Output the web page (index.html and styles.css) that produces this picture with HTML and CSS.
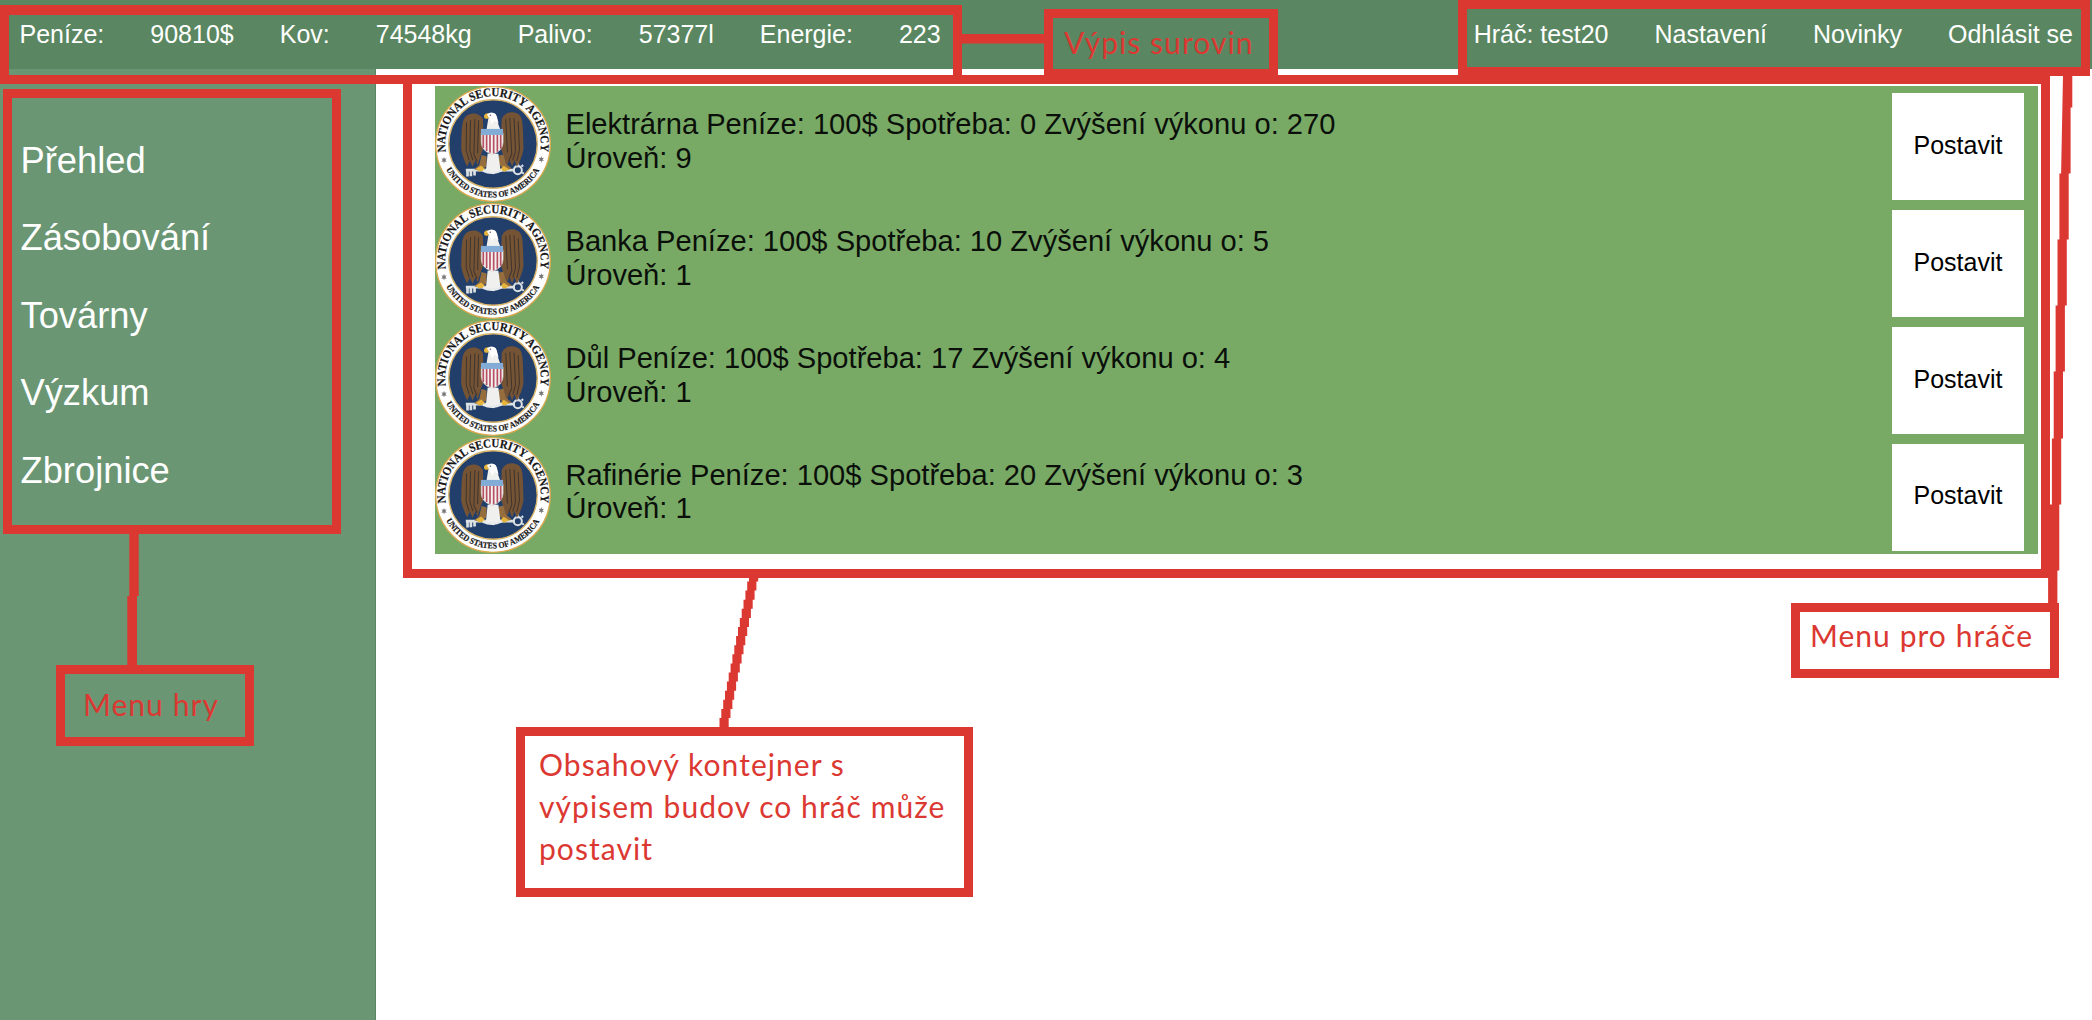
FILE: index.html
```html
<!DOCTYPE html>
<html lang="cs">
<head>
<meta charset="utf-8">
<title>Továrny</title>
<link rel="stylesheet" href="styles.css">
</head>
<body>
<svg class="defs" aria-hidden="true">
  <defs>
    <symbol id="seal" viewBox="0 0 346 346">
      <circle cx="173" cy="173" r="171" fill="#fff" stroke="#d9a84e" stroke-width="4"/>
      <circle cx="173" cy="173" r="132" fill="#223f6c" stroke="#d9b56a" stroke-width="4"/>
      <path id="ring-top" fill="none" d="M32.600 198.700A142.700 142.700 0 1 1 313.400 198.700"/>
      <path id="ring-bottom" fill="none" d="M32 247A159 159 0 0 0 314 247"/>
      <text class="seal-text seal-top"><textPath href="#ring-top" startOffset="2" textLength="494" lengthAdjust="spacingAndGlyphs">NATIONAL SECURITY AGENCY</textPath></text>
      <text class="seal-text seal-bottom"><textPath href="#ring-bottom" startOffset="2" textLength="340" lengthAdjust="spacingAndGlyphs">UNITED STATES OF AMERICA</textPath></text>
      <path fill="#777" d="M27 211l2 6 6-1-4 5 4 5-6-1-2 6-2-6-6 1 4-5-4-5 6 1zM317 209l2 6 6-1-4 5 4 5-6-1-2 6-2-6-6 1 4-5-4-5 6 1z"/>
      <g stroke="#dce1e3" fill="none" stroke-width="8">
        <path d="M92 251H238M97 253v17M107 253v16M118 253v14"/>
        <circle cx="247" cy="251" r="12" stroke-width="6"/>
        <path d="M247 235v-5M258 240l5-4M260 258l5 4" stroke-width="6"/>
      </g>
      <g fill="#755335">
        <path d="M143 99C137 87 122 78 103 84C91 88 84 98 82 112C78 135 79 161 78 187C80 204 87 222 96 240L104 222L112 241L121 221L127 237L137 205L145 184Z"/>
        <path d="M199 99C205 84 220 75 236 79C252 82 259 91 261 112C263 137 263 163 264 187C261 208 253 226 244 241L237 221L230 240L222 220L214 237L205 210L196 184Z"/>
      </g>
      <g fill="none" stroke="#3f352e" stroke-width="3">
        <path d="M94 109l-1 83 9 30M106 102l-2 91 9 28M119 99l-3 105 10 22M130 102l-3 98"/>
        <path d="M248 105l4 84-8 34M236 97l4 98-8 27M223 95l6 108-9 21M211 98l5 100"/>
      </g>
      <path fill="#966e3e" d="M139 206l15 4-1 30-20 13-16-5 15-12zM190 208l14-4 8 28 17 14-18 6-20-16z"/>
      <path fill="#f0f1ef" d="M154 128L160 91Q166 77 178 82Q187 88 187 109L194 128ZM157 202h32l6 47-20 14-23-11z"/>
      <path fill="#e5b43d" d="M160 96Q146 101 146 90Q148 80 159 81L170 87ZM122 247l16-10 14 14-20 4zM193 250l12-12 16 10-14 8z"/>
      <path fill="#fff" d="M155 85Q168 74 181 84L190 112L178 103L170 114L164 99Z"/>
      <circle cx="165" cy="87" r="2" fill="#333"/>
      <path fill="#f4f2ef" stroke="#d9d6d5" stroke-width="2" d="M138 140h65v28q0 25-32 37-33-12-33-37z"/>
      <path fill="none" stroke="#b64f64" stroke-width="5" d="M144 145v40M154 145v49M164 145v54M175 145v56M186 145v51M196 145v42"/>
      <path fill="#82abd6" d="M137 128h66v18h-66z"/>
      <path fill="none" stroke="#e8ebed" stroke-width="8" d="M143 252q28 13 57-1"/>
    </symbol>
  </defs>
</svg>

<header class="topbar">
  <div class="group">
    <span>Peníze:</span><span>90810$</span><span>Kov:</span><span>74548kg</span>
    <span>Palivo:</span><span>57377l</span><span>Energie:</span><span>223</span>
  </div>
  <nav class="group">
    <a>Hráč: test20</a><a>Nastavení</a><a>Novinky</a><a>Odhlásit se</a>
  </nav>
</header>

<div class="layout">
  <nav class="sidebar">
    <a>Přehled</a><a>Zásobování</a><a>Továrny</a><a>Výzkum</a><a>Zbrojnice</a>
  </nav>
  <main class="content">
    <section class="buildings">
      <article class="building">
        <svg class="seal"><use href="#seal"/></svg>
        <p class="info">Elektrárna Peníze: 100$ Spotřeba: 0 Zvýšení výkonu o: 270<br>Úroveň: 9</p>
        <button class="build">Postavit</button>
      </article>
      <article class="building">
        <svg class="seal"><use href="#seal"/></svg>
        <p class="info">Banka Peníze: 100$ Spotřeba: 10 Zvýšení výkonu o: 5<br>Úroveň: 1</p>
        <button class="build">Postavit</button>
      </article>
      <article class="building">
        <svg class="seal"><use href="#seal"/></svg>
        <p class="info">Důl Peníze: 100$ Spotřeba: 17 Zvýšení výkonu o: 4<br>Úroveň: 1</p>
        <button class="build">Postavit</button>
      </article>
      <article class="building">
        <svg class="seal"><use href="#seal"/></svg>
        <p class="info">Rafinérie Peníze: 100$ Spotřeba: 20 Zvýšení výkonu o: 3<br>Úroveň: 1</p>
        <button class="build">Postavit</button>
      </article>
    </section>
  </main>
</div>

<svg class="connectors" viewBox="0 0 2092 1020" aria-hidden="true">
  <path d="M962 34h83v9.500h-83z"/>
  <path d="M129.300 533h9.400v63h-1.700v70h-9.700v-70h2z"/>
  <path d="M2063 75h9.300v32.500h-1.700v66h-1.900v66h-1.900v66h-1.900v66h-1.900v67h-1.800v66h-1.900v66h-1.900v33h-9.300v-33h1.900v-66h1.900v-66h1.800v-67h1.900v-66h1.900v-66h1.900v-66h1.700z"/>
  <path d="M749 577h9.200v4.500h-1.800v9.100h-1.800v9.100h-1.900v9.100h-1.800v9.100h-1.900v9.100h-1.800v9.100h-1.900v9.100h-1.800v9.100h-1.900v9.100h-1.800v9.100h-1.900v9.100h-1.800v9.100h-1.900v9.100h-1.800v9.100h-1.900v9.100h-1.800v10h-9.200v-10h1.800v-9.100h1.900v-9.100h1.800v-9.100h1.900v-9.100h1.800v-9.100h1.900v-9.100h1.800v-9.100h1.900v-9.100h1.800v-9.100h1.900v-9.100h1.800v-9.100h1.900v-9.100h1.800v-9.100h1.900v-9.100h1.800v-9.100h1.800z"/>
</svg>
<div class="frame frame-resources"></div>
<div class="frame frame-player"></div>
<div class="frame frame-menu"></div>
<div class="frame frame-content"></div>
<div class="frame note note-resources">Výpis surovin</div>
<div class="frame note note-menu">Menu hry</div>
<div class="frame note note-content">Obsahový kontejner s<br>výpisem budov co hráč může<br>postavit</div>
<div class="frame note note-player">Menu pro hráče</div>
</body>
</html>
```
FILE: styles.css
```css
* { box-sizing: border-box; }
body {
  margin: 0;
  height: 1020px;
  position: relative;
  display: flex;
  flex-direction: column;
  overflow: hidden;
  background: #fff;
  font-family: "Liberation Sans", Arial, sans-serif;
}
.defs { position: absolute; width: 0; height: 0; }
.topbar {
  height: 69px;
  flex: none;
  display: flex;
  justify-content: space-between;
  align-items: flex-start;
  padding: 20px 19px 0 19.5px;
  background: #5a8761;
  color: #fff;
  font-size: 25px;
  line-height: 29px;
}
.group { display: flex; gap: 46px; white-space: nowrap; }
.layout { flex: 1; display: flex; }
.sidebar {
  width: 376px;
  flex: none;
  display: flex;
  flex-direction: column;
  padding: 52.5px 0 0 20.5px;
  background: #6a9674;
  border-right: 1px solid #5a8761;
  color: #fff;
  font-size: 36.3px;
  line-height: 77.6px;
}
.content { flex: 1; padding: 17.3px 54px 0 58.5px; }
.buildings { background: #78aa66; }
.building {
  display: flex;
  align-items: flex-start;
  height: 116.9px;
  padding-right: 14px;
}
.seal { width: 116px; height: 116px; flex: none; }
.info {
  flex: 1;
  margin: 0;
  padding: 22px 0 0 15px;
  color: #0b0f0a;
  font-size: 29.1px;
  line-height: 33.5px;
  white-space: nowrap;
}
.build {
  width: 132px;
  height: 107px;
  margin-top: 7px;
  padding: 0 0 3px;
  border: 0;
  background: #fff;
  color: #000;
  font: 25px "Liberation Sans", Arial, sans-serif;
}
.seal-text { font-family: "Liberation Serif", "Times New Roman", serif; font-weight: bold; fill: #161616; stroke: #161616; stroke-width: .6px; }
.seal-top { font-size: 36px; }
.seal-bottom { font-size: 26px; }

/* Annotation layer */
.connectors { position: absolute; left: 0; top: 0; width: 2092px; height: 1020px; fill: #dc3832; }
.frame { position: absolute; border: 9px solid #dc3832; }
.frame-resources { left: 0; top: 5px; width: 962px; height: 79px; border-top-width: 10px; }
.frame-player { left: 1458px; top: 0; width: 632px; height: 76px; }
.frame-menu { left: 3px; top: 89px; width: 338px; height: 445px; }
.frame-content { left: 403px; top: 75px; width: 1647px; height: 503px; }
.note {
  color: #dc3832;
  font-family: Lato, "Open Sans", sans-serif;
  font-size: 30px;
  letter-spacing: 1.05px;
  line-height: 42px;
  white-space: nowrap;
}
.note-resources { left: 1044px; top: 9px; width: 234px; height: 69px; padding: 3px 0 0 11px; }
.note-menu { left: 56px; top: 665px; width: 198px; height: 81px; padding: 9px 0 0 18px; }
.note-content { left: 516px; top: 727px; width: 457px; height: 170px; padding: 7px 0 0 14px; }
.note-player { left: 1791px; top: 603px; width: 268px; height: 75px; padding: 2px 0 0 10px; }
```
